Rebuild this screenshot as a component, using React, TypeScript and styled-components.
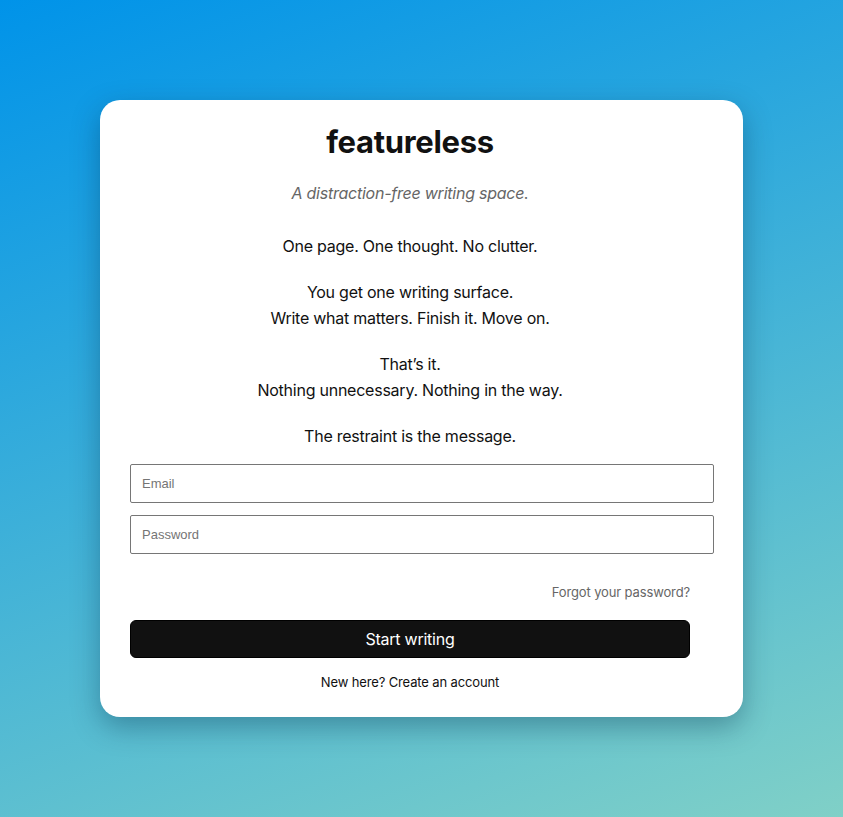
import styled, { createGlobalStyle } from "styled-components";

const GlobalStyle = createGlobalStyle`
  * { box-sizing: border-box; }
  html, body { margin: 0; padding: 0; }
  body {
    font-family: Inter, "Noto Sans", sans-serif;
    color: #111;
  }
`;

const Page = styled.main`
  min-height: 100vh;
  display: flex;
  align-items: center;
  justify-content: center;
  background: linear-gradient(160deg, #0093e9 0%, #80d0c7 100%);
`;

const Card = styled.section`
  width: 643px;
  padding: 24px 30px 27px;
  background: #fff;
  border-radius: 20px;
  box-shadow: 0 10px 28px rgba(0, 40, 70, 0.35);
`;

const Content = styled.div`
  width: 560px;
  text-align: center;
  letter-spacing: -0.015em;
`;

const Title = styled.h1`
  margin: 0;
  font-size: 31px;
  line-height: 36px;
  font-weight: 700;
  letter-spacing: -0.01em;
  color: #111;
`;

const Tagline = styled.p`
  margin: 21px 0 27px;
  font-size: 16px;
  line-height: 1.6;
  font-style: italic;
  color: #666;
`;

const Copy = styled.p<{ $last?: boolean }>`
  margin: 0 0 ${(p) => (p.$last ? "14px" : "21px")};
  font-size: 16px;
  line-height: 1.6;
  color: #111;
`;

const Form = styled.form`
  display: flex;
  flex-direction: column;
  gap: 12px;
`;

const Field = styled.input`
  width: calc(100% + 24px);
  height: 39px;
  padding: 0 11px;
  border: 1px solid #767676;
  border-radius: 2px;
  font-family: "Liberation Sans", Arial, sans-serif;
  font-size: 13px;
  letter-spacing: 0;
  color: #111;
  background: #fff;
  outline: none;

  &::placeholder {
    color: #757575;
  }
`;

const ForgotRow = styled.div`
  display: flex;
  justify-content: flex-end;
  margin: 30px 0 20px;
`;

const Forgot = styled.a`
  font-size: 13px;
  line-height: 16px;
  letter-spacing: -0.01em;
  color: #666;
  text-decoration: none;
`;

const Submit = styled.button`
  width: 100%;
  height: 38px;
  border: 1px solid #000;
  border-radius: 6px;
  background: #111;
  color: #fff;
  font-family: Inter, sans-serif;
  font-size: 16px;
  letter-spacing: -0.015em;
`;

const SignUp = styled.a`
  display: block;
  margin-top: 16px;
  font-size: 13px;
  line-height: 16px;
  letter-spacing: -0.01em;
  color: #111;
  text-decoration: none;
`;

export default function App() {
  return (
    <>
      <GlobalStyle />
      <Page>
        <Card>
          <Content>
            <Title>featureless</Title>
            <Tagline>A distraction-free writing space.</Tagline>
            <Copy>One page. One thought. No clutter.</Copy>
            <Copy>
              You get one writing surface.
              <br />
              Write what matters. Finish it. Move on.
            </Copy>
            <Copy>
              That’s it.
              <br />
              Nothing unnecessary. Nothing in the way.
            </Copy>
            <Copy $last>The restraint is the message.</Copy>
            <Form onSubmit={(e) => e.preventDefault()}>
              <Field type="email" placeholder="Email" />
              <Field type="password" placeholder="Password" />
            </Form>
            <ForgotRow>
              <Forgot href="#">Forgot your password?</Forgot>
            </ForgotRow>
            <Submit type="button">Start writing</Submit>
            <SignUp href="#">New here? Create an account</SignUp>
          </Content>
        </Card>
      </Page>
    </>
  );
}
